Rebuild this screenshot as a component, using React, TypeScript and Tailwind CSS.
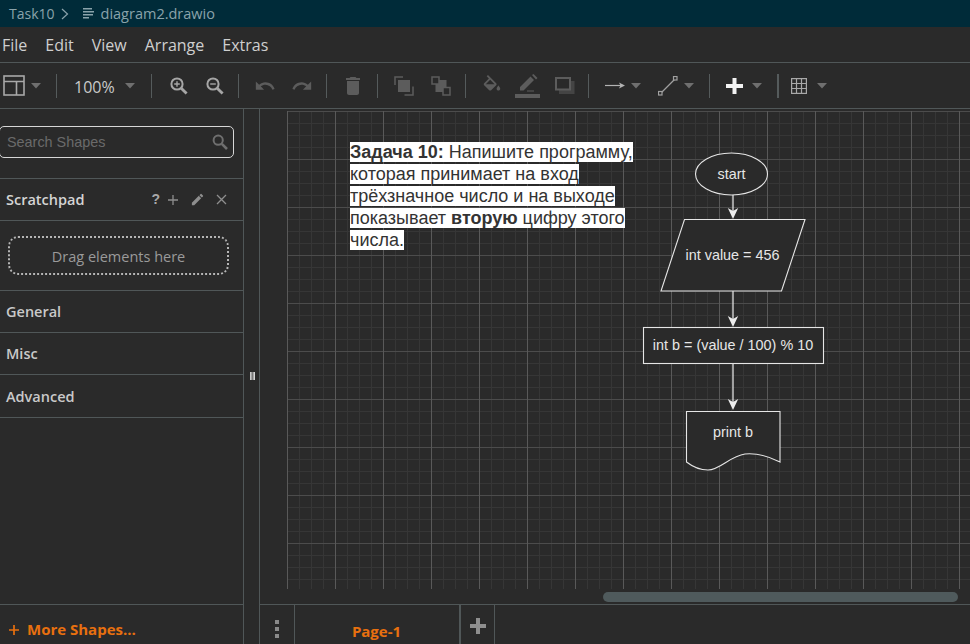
import React from "react";

const Caret = ({ className = "" }: { className?: string }) => (
  <svg width="10" height="6" viewBox="0 0 10 6" className={className}>
    <path d="M0 0h10L5 5.5z" fill="#6f6f6f" />
  </svg>
);
const Sep = ({ className = "" }: { className?: string }) => (
  <div className={`h-6 w-px bg-[#555b5c] shrink-0 ${className}`} />
);
const DIM = "#5c5c5c";

const Search = ({ sign }: { sign: "plus" | "minus" }) => (
  <svg width="18" height="18" viewBox="0 0 18 18" fill="none" stroke="#a6a6a6" className="shrink-0">
    <circle cx="7" cy="7" r="5.6" strokeWidth="2" />
    <path d="M11.2 11.2L16.6 16.6" strokeWidth="2.8" />
    <path d={sign === "plus" ? "M4.2 7h5.6M7 4.2v5.6" : "M4.2 7h5.6"} strokeWidth="1.4" />
  </svg>
);

const Mat = ({ d, size = 24, fill = DIM, cls = "" }: { d: string; size?: number; fill?: string; cls?: string }) => (
  <svg width={size} height={size} viewBox="0 0 24 24" fill={fill} className={`shrink-0 ${cls}`}>
    <path d={d} fillRule="evenodd" />
  </svg>
);

function Toolbar() {
  return (
    <div className="h-[46px] flex items-center border-b border-[#505758] shrink-0 relative">
      <svg width="22" height="21" viewBox="0 0 22 21" fill="none" stroke="#a8a8a8" strokeWidth="1.6" className="ml-[3px] shrink-0">
        <rect x="1" y="1" width="20" height="19" />
        <path d="M1 6.5h20M13.5 6.5V20" />
      </svg>
      <Caret className="ml-[6px]" />
      <Sep className="ml-[15px]" />
      <span className="ml-[17px] pt-[3px] text-[16px] text-[#c9c9c9] w-[41px] [font-family:'Open_Sans',sans-serif]">100%</span>
      <Caret className="ml-[10px]" />
      <Sep className="ml-[16px]" />
      <div className="ml-[18px]"><Search sign="plus" /></div>
      <div className="ml-[18px]"><Search sign="minus" /></div>
      <Sep className="ml-[14px]" />
      <Mat cls="ml-[15px]" size={22} d="M12.5 8c-2.65 0-5.05.99-6.9 2.6L2 7v9h9l-3.62-3.62c1.39-1.16 3.16-1.88 5.12-1.88 3.54 0 6.55 2.31 7.6 5.5l2.37-.78C21.08 11.03 17.15 8 12.5 8z" />
      <Mat cls="ml-[15px]" size={22} d="M18.4 10.6C16.55 8.99 14.15 8 11.5 8c-4.65 0-8.58 3.03-9.96 7.22L3.9 16c1.05-3.19 4.05-5.5 7.6-5.5 1.95 0 3.73.72 5.12 1.88L13 16h9V7l-3.6 3.6z" />
      <Sep className="ml-[13px]" />
      <Mat cls="ml-[14px]" d="M6 19c0 1.1.9 2 2 2h8c1.1 0 2-.9 2-2V7H6v12zM19 4h-3.5l-1-1h-5l-1 1H5v2h14V4z" />
      <Sep className="ml-[12px]" />
      <svg width="20" height="20" viewBox="0 0 20 20" className="ml-[16px] shrink-0" fill="none">
        <path d="M1 9V1h8" stroke={DIM} strokeWidth="1.5" />
        <path d="M19 10.5V19h-8.5" stroke={DIM} strokeWidth="1.5" />
        <rect x="4" y="4" width="12" height="12" fill={DIM} />
      </svg>
      <svg width="20" height="20" viewBox="0 0 20 20" className="ml-[17px] shrink-0" fill="none">
        <rect x="4.5" y="4" width="11" height="12" fill={DIM} />
        <rect x="1" y="1" width="7" height="7" stroke={DIM} strokeWidth="1.5" fill="#2a2a2a" />
        <rect x="12" y="11.5" width="7" height="7.5" stroke={DIM} strokeWidth="1.5" fill="#2a2a2a" />
      </svg>
      <Sep className="ml-[14px]" />
      <Mat cls="ml-[15px]" size={22} d="M16.56 8.94L7.62 0 6.21 1.41l2.38 2.38-5.15 5.15c-.59.59-.59 1.54 0 2.12l5.5 5.5c.29.29.68.44 1.06.44s.77-.15 1.06-.44l5.5-5.5c.59-.58.59-1.53 0-2.12zM5.21 10L10 5.21 14.79 10H5.21zM19 11.5s-2 2.17-2 3.5c0 1.1.9 2 2 2s2-.9 2-2c0-1.33-2-3.5-2-3.5z" />
      <svg width="25" height="24" viewBox="0 0 25 24" className="ml-[12px] shrink-0" fill={DIM}>
        <path d="M5 16.5v-3.5L15.5 2.5l3.5 3.5L8.5 16.5zM17 1l1.5-1 4 4-1.5 1.5zM12 16.5h7v1h-7z" />
        <rect x="0" y="20" width="25" height="4" />
      </svg>
      <svg width="20" height="18" viewBox="0 0 20 18" className="ml-[15px] shrink-0" fill="none">
        <rect x="4" y="4" width="15.5" height="13" fill="#444" />
        <rect x="1" y="1" width="14" height="11.5" stroke={DIM} strokeWidth="2" fill="#2a2a2a" />
      </svg>
      <Sep className="ml-[13px]" />
      <svg width="20" height="9" viewBox="0 0 20 9" className="ml-[16px] shrink-0" fill="none">
        <path d="M0 4.5h17" stroke="#b3b3b3" strokeWidth="1.2" />
        <path d="M20 4.5L14 1.5l1.4 3-1.4 3z" fill="#b3b3b3" />
      </svg>
      <Caret className="ml-[6px]" />
      <svg width="20" height="20" viewBox="0 0 20 20" className="ml-[17px] shrink-0" fill="none" stroke="#a0a0a0">
        <path d="M3 17L17 3" strokeWidth="1.2" />
        <rect x="0.5" y="15.5" width="3.5" height="3.5" strokeWidth="1.2" fill="#2a2a2a" />
        <rect x="15.5" y="0.5" width="3.5" height="3.5" strokeWidth="1.2" fill="#2a2a2a" />
      </svg>
      <Caret className="ml-[6px]" />
      <Sep className="ml-[15px]" />
      <svg width="17" height="16" viewBox="0 0 17 16" className="ml-[16px] shrink-0" fill="#f2f2f2">
        <path d="M6.5 0h4v6h6.5v4h-6.5v6h-4v-6H0V6h6.5z" />
      </svg>
      <Caret className="ml-[9px]" />
      <Sep className="ml-[15px] !w-[2px]" />
      <svg width="16" height="16" viewBox="0 0 16 16" className="ml-[12px] shrink-0" fill="none" stroke="#a8a8a8" strokeWidth="1.2">
        <rect x="0.6" y="0.6" width="14.8" height="14.8" />
        <path d="M5.5 0.6v14.8M10.5 0.6v14.8M0.6 5.5h14.8M0.6 10.5h14.8" />
      </svg>
      <Caret className="ml-[10px]" />
    </div>
  );
}

function Sidebar() {
  const Section = ({ label, cls = "h-[42px]" }: { label: string; cls?: string }) => (
    <div className={`${cls} flex items-center pl-[6px] pt-px border-b border-[#505758] text-[14.5px] font-semibold text-[#c9c9c9] shrink-0`}>{label}</div>
  );
  return (
    <aside className="w-[244px] shrink-0 border-r border-[#505758] flex flex-col">
      <div className="h-[70px] shrink-0 border-b border-[#505758] pt-[17px]">
        <div className="-ml-px w-[235px] h-[32px] rounded-[5px] border border-[#d6d6d6] flex items-center justify-between pl-[7px] pr-[5px]">
          <span className="pt-[2px] text-[14.4px] text-[#6a6a6a] [font-family:'Liberation_Sans',sans-serif]">Search Shapes</span>
          <svg width="16" height="16" viewBox="0 0 16 16" fill="none" stroke="#6f6f6f">
            <circle cx="6.2" cy="6.2" r="4.6" strokeWidth="2" />
            <path d="M9.8 9.8L15 15" strokeWidth="2.6" />
          </svg>
        </div>
      </div>
      <div className="h-[42px] shrink-0 flex items-center border-b border-[#505758] pl-[6px] pr-[16px]">
        <span className="text-[14.5px] font-semibold text-[#d4d4d4]">Scratchpad</span>
        <span className="ml-auto text-[14px] font-semibold text-[#a8a8a8] [font-family:'Liberation_Sans',sans-serif]">?</span>
        <svg width="12" height="12" viewBox="0 0 12 12" stroke="#8e8e8e" strokeWidth="1.3" className="ml-[7px]"><path d="M6 1v10M1 6h10" /></svg>
        <svg width="15" height="15" viewBox="0 0 24 24" fill="#8e8e8e" className="ml-[11px]"><path d="M3 17.25V21h3.75L17.81 9.94l-3.75-3.75L3 17.25zM20.71 7.04a1 1 0 000-1.41l-2.34-2.34a1 1 0 00-1.41 0l-1.83 1.83 3.75 3.75 1.83-1.83z" /></svg>
        <svg width="11" height="11" viewBox="0 0 11 11" stroke="#8e8e8e" strokeWidth="1.3" className="ml-[11px]"><path d="M1 1l9 9M10 1l-9 9" /></svg>
      </div>
      <div className="h-[70px] shrink-0 border-b border-[#505758] pt-[15px] pl-[8px]">
        <div className="w-[221px] h-[39px] rounded-[10px] border-2 border-dotted border-[#b5b5b5] flex items-center justify-center pt-[2px] text-[14.5px] text-[#9a9a9a]">Drag elements here</div>
      </div>
      <Section label="General" />
      <Section label="Misc" />
      <Section label="Advanced" cls="h-[43px]" />
      <div className="flex-1" />
      <div className="h-[40px] shrink-0 border-t border-[#505758] flex items-center pl-[8px] pt-[10px] text-[15px] font-bold text-[#e8700f]">
        <svg width="12" height="12" viewBox="0 0 12 12" stroke="#e8700f" strokeWidth="1.7"><path d="M6 1v10M1 6h10" /></svg>
        <span className="ml-[7px]">More Shapes...</span>
      </div>
    </aside>
  );
}

function Splitter() {
  return (
    <div className="w-[16px] shrink-0 border-r border-[#505758] flex items-center justify-center pb-[1px] pl-[2px]">
      <div className="w-[5px] h-[8px] bg-[linear-gradient(90deg,#ddd,#777_50%,#eee)]" />
    </div>
  );
}

const Arrow = ({ x, y1, y2 }: { x: number; y1: number; y2: number }) => (
  <g>
    <path d={`M${x} ${y1}V${y2 - 6}`} stroke="#e0e0e0" strokeWidth="1.3" fill="none" />
    <path d={`M${x} ${y2}l-5.2 -11 5.2 3 5.2 -3z`} fill="#ececec" />
  </g>
);

function Diagram() {
  return (
    <svg width="683" height="478" viewBox="287 111 683 478" className="absolute inset-0" fill="none">
      <ellipse cx="731.5" cy="174" rx="36" ry="21" stroke="#e6e6e6" strokeWidth="1.1" fill="#2a2a2a" />
      <Arrow x={733} y1={195} y2={219} />
      <path d="M684.5 219.5H805L781.5 291H661z" stroke="#e6e6e6" strokeWidth="1.1" fill="#2a2a2a" />
      <Arrow x={733} y1={291} y2={327} />
      <rect x="643.5" y="327.5" width="180" height="36" stroke="#e6e6e6" strokeWidth="1.1" fill="#2a2a2a" />
      <Arrow x={733} y1={363} y2={410} />
      <path d="M686.5 411.5H780V462C768 456 755 453 745 454C730 456 720 470 708 470C700 470 693 467 686.5 462z" stroke="#e6e6e6" strokeWidth="1.1" fill="#2a2a2a" />
      <g fill="#e6e6e6" fontFamily="'Liberation Sans', sans-serif" fontSize="14.4" textAnchor="middle">
        <text x="731.5" y="179">start</text>
        <text x="732.5" y="260">int value = 456</text>
        <text x="733" y="350">int b = (value / 100) % 10</text>
        <text x="733" y="437">print b</text>
      </g>
    </svg>
  );
}

function Canvas() {
  return (
    <div className="flex-1 flex flex-col min-w-0">
      <div className="flex-1 relative min-h-0">
        <div className="absolute left-[27px] right-0 top-[2px] h-[478px] overflow-hidden bg-[linear-gradient(90deg,#595959_1px,transparent_1px),linear-gradient(0deg,transparent_47px,#4c4c4c_47px),linear-gradient(90deg,#363636_1px,transparent_1px),linear-gradient(0deg,transparent_11px,#363636_11px)] bg-[size:48px_48px,48px_48px,12px_12px,12px_12px]">
          <Diagram />
          <div className="absolute left-[63px] top-[30px] text-[18px] leading-[22px] text-[#333333] [font-family:'Liberation_Sans',sans-serif] w-[320px]">
            <span className="bg-white">
              <b>Задача 10:</b> Напишите программу,<br />которая принимает на вход<br />трёхзначное число и на выходе<br />показывает <b>вторую</b> цифру этого<br />числа.
            </span>
          </div>
        </div>
        <div className="absolute left-[343px] w-[355px] top-[483px] h-[10px] rounded-[5px] bg-[#4f5a5c]" />
      </div>
      <div className="h-[40px] shrink-0 border-t border-[#505758] flex">
        <div className="w-[35px] border-r border-[#505758] flex flex-col items-center justify-center gap-[3px] pt-[8px] pr-[1px]">
          <i className="block w-[4px] h-[4px] bg-[#8a8a8a]" />
          <i className="block w-[4px] h-[4px] bg-[#8a8a8a]" />
          <i className="block w-[4px] h-[4px] bg-[#8a8a8a]" />
        </div>
        <div className="w-[166px] border-r-2 border-[#505758] flex items-center justify-center pt-[14px] pr-[1px] text-[15px] font-bold text-[#e8700f]">Page-1</div>
        <div className="w-[34px] border-r border-[#505758] flex items-center justify-center pt-[3px]">
          <svg width="16" height="16" viewBox="0 0 16 16" fill="#8f8f8f"><path d="M6 0h4v6h6v4h-6v6H6v-6H0V6h6z" /></svg>
        </div>
      </div>
    </div>
  );
}

export default function App() {
  return (
    <div className="w-[970px] h-[644px] overflow-hidden bg-[#2a2a2a] flex flex-col [font-family:'Open_Sans',sans-serif]">
      <div className="h-[27px] shrink-0 bg-[#002b39] flex items-center pl-[9px] text-[14.5px] text-[#8aa3ab]">
        <span className="text-[14px]">Task10</span>
        <svg width="8" height="12" viewBox="0 0 8 12" fill="none" stroke="#8aa3ab" strokeWidth="1.2" className="ml-[6px]"><path d="M1 1l5.5 5L1 11" /></svg>
        <svg width="11" height="11" viewBox="0 0 11 11" fill="#8aa3ab" className="ml-[14px]"><path d="M0 0h9v1.6H0zM0 3h11v1.6H0zM0 6h10v1.6H0zM0 9h6v1.6H0z" /></svg>
        <span className="ml-[7px]">diagram2.drawio</span>
      </div>
      <div className="h-[36px] shrink-0 border-b border-[#505758] flex items-center pl-[2px] gap-[18px] text-[16px] text-[#cfcfcf]">
        <span>File</span><span>Edit</span><span>View</span><span>Arrange</span><span>Extras</span>
      </div>
      <Toolbar />
      <div className="flex-1 flex min-h-0">
        <Sidebar />
        <Splitter />
        <Canvas />
      </div>
    </div>
  );
}
